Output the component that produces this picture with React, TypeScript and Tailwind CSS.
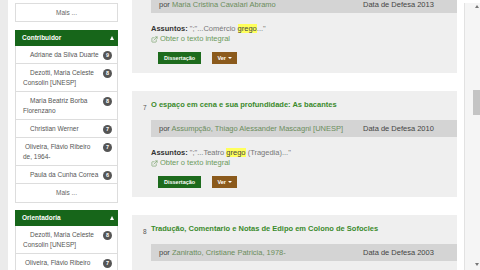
import { ExternalLink } from 'lucide-react';

type Facet = { label: string; count: number; indent: string };

const contribuidores: Facet[] = [
  { label: 'Adriane da Silva Duarte', count: 9, indent: 'indent-[7px]' },
  { label: 'Dezotti, Maria Celeste Consolin [UNESP]', count: 8, indent: 'indent-[7px]' },
  { label: 'Maria Beatriz Borba Florenzano', count: 8, indent: 'indent-[7px]' },
  { label: 'Christian Werner', count: 7, indent: 'indent-[7px]' },
  { label: 'Oliveira, Flávio Ribeiro de, 1964-', count: 7, indent: 'indent-[2px]' },
  { label: 'Paula da Cunha Correa', count: 6, indent: 'indent-[7px]' },
];

const orientadores: Facet[] = [
  { label: 'Dezotti, Maria Celeste Consolin [UNESP]', count: 8, indent: 'indent-[7px]' },
  { label: 'Oliveira, Flávio Ribeiro de, 1964-', count: 7, indent: 'indent-[2px]' },
];

type Result = {
  num: string;
  title: string;
  author: string;
  year: string;
  before: string;
  after: string;
};

const results: Result[] = [
  { num: '6', title: '', author: 'Maria Cristina Cavalari Abramo', year: '2013', before: '";"...Comércio ', after: '..."' },
  { num: '7', title: 'O espaço em cena e sua profundidade: As bacantes', author: 'Assumpção, Thiago Alessander Mascagni [UNESP]', year: '2010', before: '";"...Teatro ', after: ' (Tragedia)..."' },
  { num: '8', title: 'Tradução, Comentario e Notas de Edipo em Colono de Sofocles', author: 'Zaniratto, Cristiane Patricia, 1978-', year: '2003', before: '";"...Tragedia ', after: '..."' },
];

function FacetPanel({ title, items }: { title: string; items: Facet[] }) {
  return (
    <div>
      <div className="h-[16px] bg-[#17661a] flex items-center justify-between pl-[7px] pr-[4px]">
        <span className="text-[6.5px] font-bold text-white">{title}</span>
        <span className="w-0 h-0 border-x-[2.5px] border-b-[4px] border-x-transparent border-b-white"></span>
      </div>
      {items.map((f, i) => (
        <div key={i} className="flex items-start border-x border-b border-[#dddddd] pl-[7px] pr-[5px] pt-[4px] pb-[3px] bg-white">
          <span className={`flex-1 text-[6.5px] leading-[10px] text-[#555] ${f.indent}`}>{f.label}</span>
          <span className="ml-[2px] mt-[0.5px] w-[9px] h-[9px] rounded-full bg-[#555] text-white text-[5.5px] font-bold flex items-center justify-center shrink-0">{f.count}</span>
        </div>
      ))}
      <div className="h-[19px] border-x border-b border-[#dddddd] flex items-center justify-center text-[6.5px] text-[#666] bg-white">Mais ...</div>
    </div>
  );
}

function ResultCard({ r }: { r: Result }) {
  return (
    <div className="h-[106px] shrink-0 bg-[#efefef] pl-[11px] pt-[9px]">
      <div className="flex">
        <span className="w-[8px] mt-[3px] text-[6.5px] leading-[10px] text-[#555]">{r.num}</span>
        <div className="flex-1">
          <div className="h-[10px] text-[7.5px] leading-[10px] font-bold text-[#3a8a2c] whitespace-nowrap">{r.title}</div>
          <div className="mt-[10px] h-[17px] bg-[#d4d4d4] flex items-center text-[7.5px] text-[#444]">
            <div className="flex-1 pl-[8px] whitespace-nowrap">por <span className="text-[#6b8d5c]">{r.author}</span></div>
            <div className="w-[94px] whitespace-nowrap">Data de Defesa {r.year}</div>
          </div>
          <div className="mt-[11px] text-[7.5px] leading-[10px] text-[#777]">
            <span className="font-bold text-[#333]">Assuntos:</span> {r.before}
            <span className="bg-[#ffff5c] text-[#444]">grego</span>
            {r.after}
          </div>
          <div className="flex items-center gap-[2px] text-[7.5px] leading-[10px] text-[#6a9a5c]">
            <ExternalLink size={7} strokeWidth={2} />
            <span>Obter o texto integral</span>
          </div>
          <div className="mt-[8px] ml-[7px] flex gap-[11px]">
            <span className="h-[12px] px-[6px] bg-[#1d6b1d] text-white text-[5.5px] font-bold flex items-center">Dissertação</span>
            <span className="h-[12px] w-[25px] bg-[#8b5a1c] text-white text-[5.5px] font-bold flex items-center justify-center gap-[2px]">
              Ver
              <span className="w-0 h-0 border-x-[2px] border-t-[2px] border-x-transparent border-t-white"></span>
            </span>
          </div>
        </div>
      </div>
    </div>
  );
}

export default function App() {
  return (
    <div className="flex h-[270px] w-[480px] overflow-hidden bg-white font-['Liberation_Sans',Arial,sans-serif]">
      <div className="w-[8px] shrink-0 bg-[#ebebeb]"></div>

      <aside className="ml-[7px] w-[103px] shrink-0">
        <div className="mt-[3px] h-[19px] border border-[#dddddd] flex items-center justify-center text-[6.5px] text-[#666]">Mais ...</div>
        <div className="mt-[8px]">
          <FacetPanel title="Contribuidor" items={contribuidores} />
        </div>
        <div className="mt-[7px]">
          <FacetPanel title="Orientadoria" items={orientadores} />
        </div>
      </aside>

      <main className="ml-[14px] w-[325px] shrink-0 mt-[-33px] flex flex-col gap-[18px]">
        {results.map((r) => (
          <ResultCard key={r.num} r={r} />
        ))}
      </main>

      <div className="ml-[7px] mt-[3px] w-[16px] shrink-0 bg-[#f5f5f5] border-l border-[#e2e2e2] flex flex-col items-start">
        <span className="ml-[10px] mt-[2px] w-0 h-0 border-x-[2px] border-b-[3px] border-x-transparent border-b-[#777]"></span>
        <span className="ml-[8px] mt-[82px] w-[7px] h-[25px] bg-[#c4c4c4]"></span>
        <span className="ml-[10px] mt-[148px] w-0 h-0 border-x-[2px] border-t-[3px] border-x-transparent border-t-[#777]"></span>
      </div>
    </div>
  );
}
